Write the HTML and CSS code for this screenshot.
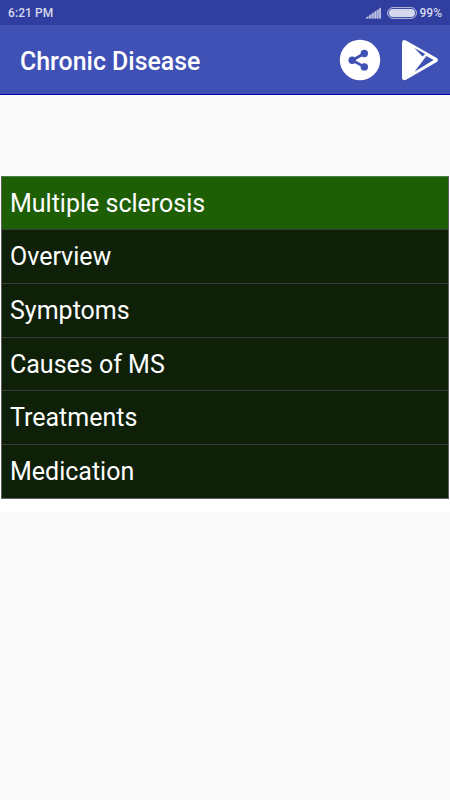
FILE: index.html
```html
<!DOCTYPE html>
<html lang="en">
<head>
<meta charset="utf-8">
<title>Chronic Disease</title>
<link rel="stylesheet" href="styles.css">
</head>
<body>
<div class="status">
  <span class="time">6:21 PM</span>
  <svg class="signal" width="17" height="12" viewBox="0 0 17 12"><path class="wedge" d="M0 11.5L16 .5V11.5Z"/><path d="M1 11.5V10.6L3 9.6V11.5ZM4 11.5V8.6L5.7 7.4V11.5ZM6.7 11.5V6.8L8.4 5.6V11.5ZM9.3 11.5V5L11 3.8V11.5ZM11.8 11.5V3.4L13.4 2.3V11.5ZM14.2 11.5V1.7L16 .5V11.5Z"/></svg>
  <svg class="battery" width="30" height="12" viewBox="0 0 30 12"><rect class="shell" x=".6" y=".6" width="28.8" height="10.8" rx="5.4"/><rect x="2" y="2" width="26" height="8" rx="4"/></svg>
  <span class="percent">99%</span>
</div>
<header class="bar">
  <h1 class="title">Chronic Disease</h1>
  <svg class="share" width="42" height="42" viewBox="0 0 42 42"><circle class="disc" cx="21" cy="21" r="20.2"/><path d="M25.3 14.5L13.2 21.2L25.3 27.9"/><circle class="dot" cx="25.3" cy="14.5" r="3.7"/><circle class="dot" cx="13.2" cy="21.2" r="3.7"/><circle class="dot" cx="25.3" cy="27.9" r="3.7"/></svg>
  <svg class="play" width="38" height="42" viewBox="0 0 38 42"><path class="face" d="M5 1.4L35.8 18.9Q38.2 21 35.8 22.9L5 40.7Q1.2 42.3 1 38.7V3.7Q1.2 -.3 5 1.4Z"/><path class="cut" d="M13.5 9.1L24.2 15L21.5 17.6Z"/><path class="cut" d="M25.4 16.9L32.6 21.1L13.5 32.7Z"/></svg>
</header>
<main>
  <ul class="list">
    <li class="row head">Multiple sclerosis</li>
    <li class="row">Overview</li>
    <li class="row">Symptoms</li>
    <li class="row">Causes of MS</li>
    <li class="row">Treatments</li>
    <li class="row">Medication</li>
  </ul>
</main>
</body>
</html>
```

FILE: styles.css
```css
* { box-sizing: border-box; }
body { margin: 0; height: 800px; overflow: hidden; background: #fafafa; font-family: Roboto, sans-serif; color: #fff; }
.status { display: flex; align-items: center; height: 25px; padding: 0 8px; background: #303f9f; color: #d5d8ec; font-size: 12px; font-weight: 500; }
.time { flex: 1; letter-spacing: .1px; }
.signal { fill: #b9bee0; margin-right: 5px; }
.wedge { fill: #7b84c0; }
.battery { fill: #d5d8ec; margin-right: 3px; }
.shell { fill: none; stroke: #bdc2e0; stroke-width: 1; }
.bar { display: flex; align-items: center; height: 70px; padding: 0 11px 0 20px; background: #3f51b5; border-bottom: 1px solid #0000a0; }
.title { flex: 1; margin: 5px 0 0; font-size: 24.9px; line-height: 30px; font-weight: 500; }
.share { margin-right: 20px; fill: none; stroke: #3f51b5; stroke-width: 2.7; }
.disc { fill: #fff; stroke: none; }
.dot { fill: #3f51b5; stroke: none; }
.face { fill: #fff; }
.cut { fill: #3f51b5; }
main { margin-top: 81px; padding: 0 1px 13px; background: #fff; }
.list { display: grid; grid-template-rows: 53px 54px 54px 53px 54px 53px; margin: 0; padding: 0; list-style: none; border: 1px solid #606060; border-top-color: #458045; background: #0e2008; }
.row { display: flex; align-items: center; padding: 1px 0 0 8px; border-bottom: 1px solid #3a3a3a; font-size: 25px; line-height: 30px; }
.row:last-child { border-bottom: 0; }
.head { background: #1e5e05; }
```
